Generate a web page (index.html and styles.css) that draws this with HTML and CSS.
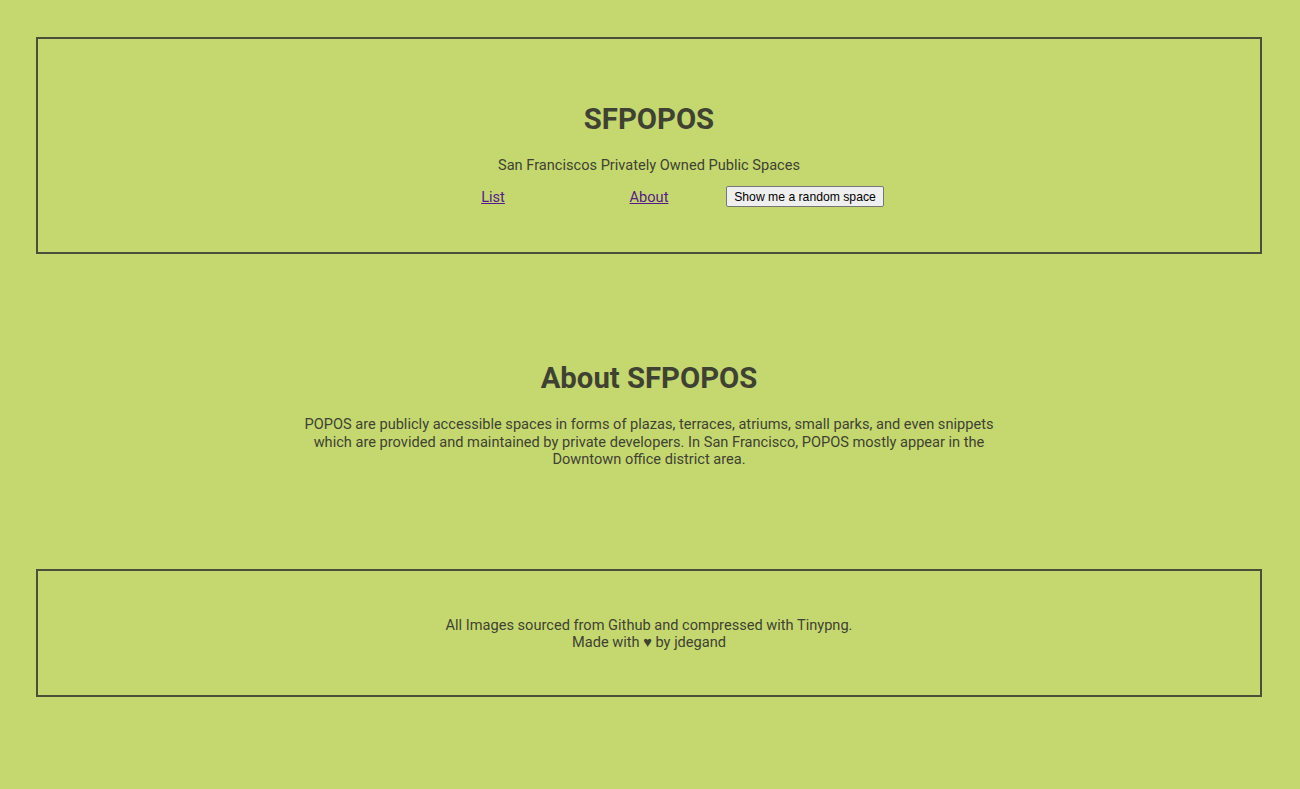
FILE: index.html
```html
<!DOCTYPE html>
<html lang="en">
<head>
<meta charset="utf-8">
<title>SFPOPOS</title>
<link rel="stylesheet" href="styles.css">
</head>
<body>
<header class="box header">
  <h1 class="title">SFPOPOS</h1>
  <p class="subtitle">San Franciscos Privately Owned Public Spaces</p>
  <nav class="nav">
    <a class="nav-link" href="#">List</a>
    <a class="nav-link" href="#">About</a>
    <button class="random-btn" type="button">Show me a random space</button>
  </nav>
</header>
<main class="about">
  <h2 class="about-title">About SFPOPOS</h2>
  <p class="about-text">POPOS are publicly accessible spaces in forms of plazas, terraces, atriums, small parks, and even snippets which are provided and maintained by private developers. In San Francisco, POPOS mostly appear in the Downtown office district area.</p>
</main>
<footer class="box footer">
  <p class="footer-text">All Images sourced from Github and compressed with Tinypng.<br>Made with &#9829; by jdegand</p>
</footer>
</body>
</html>
```
FILE: styles.css
```css
html, body {
  background: #c5d870;
}
body {
  margin: 0;
  padding: 37px 38px 0 36px;
  font-family: Roboto, "Liberation Sans", sans-serif;
  color: #3f4232;
}
.box {
  border: 2px solid #4b4f3a;
}
.header {
  display: flex;
  flex-direction: column;
  align-items: center;
  padding: 63px 0 45px;
}
.title {
  margin: 0;
  font-size: 29.3px;
  line-height: 34px;
  font-weight: 700;
}
.subtitle {
  margin: 20px 0 0;
  font-size: 14.6px;
  line-height: 18px;
}
.nav {
  margin-top: 12px;
  display: grid;
  grid-template-columns: repeat(3, 156px);
  justify-items: center;
  align-items: center;
  height: 21px;
}
.nav-link {
  color: #551a8b;
  font-size: 14.6px;
  line-height: 18px;
}
.random-btn {
  font-family: "Liberation Sans", Arial, sans-serif;
  font-size: 12.2px;
  color: #000;
  background: #efefef;
  border: 1px solid #767676;
  border-radius: 2px;
  padding: 1px 7px;
  height: 21px;
  white-space: nowrap;
}
.about {
  display: flex;
  flex-direction: column;
  align-items: center;
  padding: 107px 0 100px;
}
.about-title {
  margin: 0;
  font-size: 29.3px;
  line-height: 34px;
  font-weight: 700;
}
.about-text {
  margin: 21px 0 0;
  max-width: 700px;
  text-align: center;
  font-size: 14.6px;
  line-height: 17.5px;
}
.footer {
  padding: 46px 0 44px;
  text-align: center;
}
.footer-text {
  margin: 0;
  font-size: 14.6px;
  line-height: 17px;
}
```
